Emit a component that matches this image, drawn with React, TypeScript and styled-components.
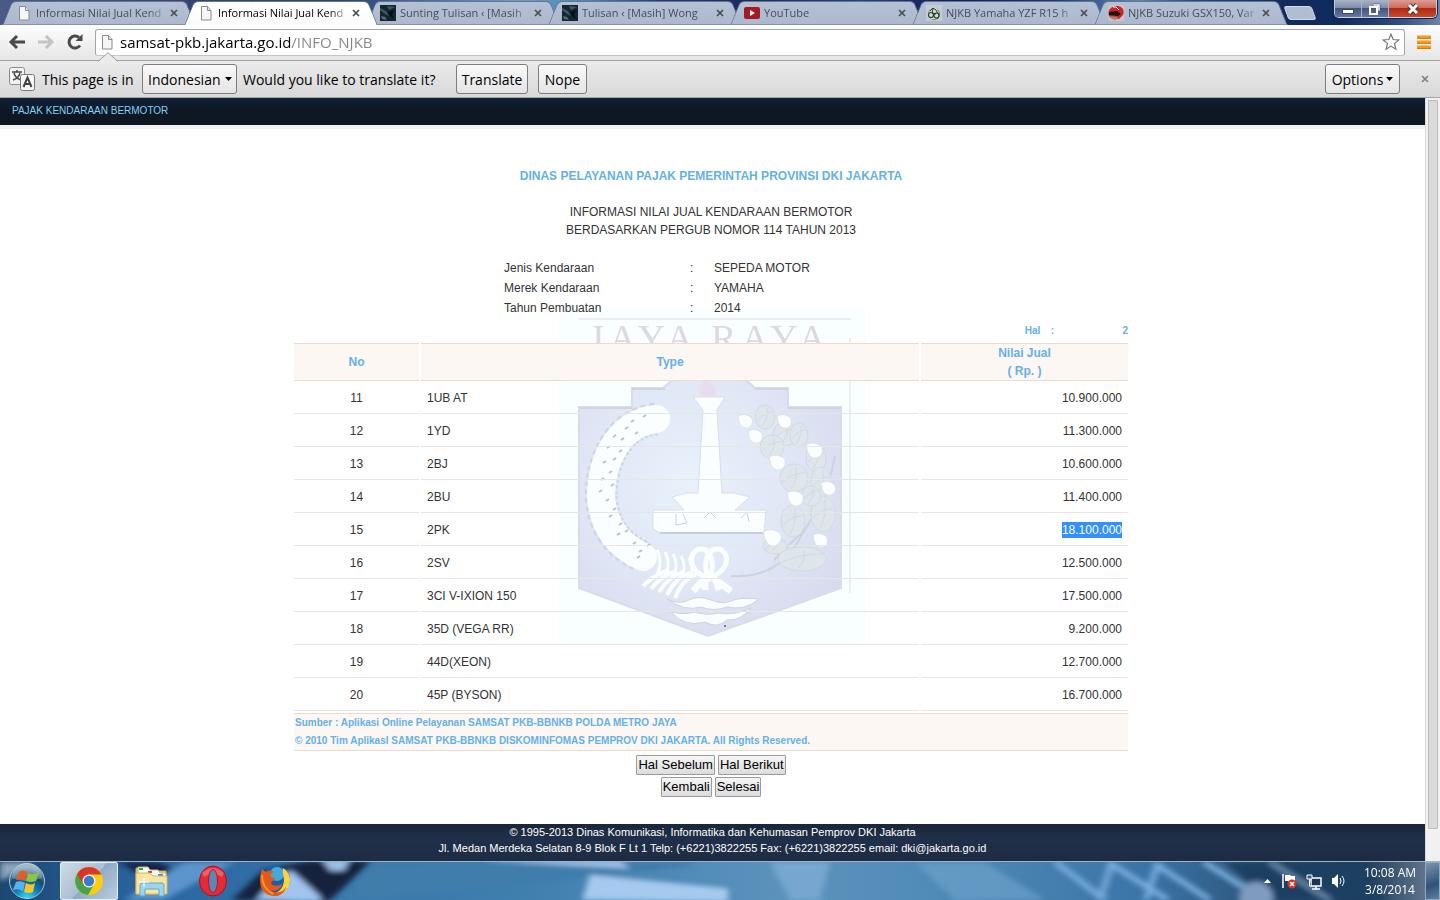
import React from 'react';
import styled, { createGlobalStyle, css } from 'styled-components';

const uiFont = '"Open Sans", "Noto Sans", sans-serif';
const pageFont = '"Liberation Sans", Arial, sans-serif';

const GlobalStyle = createGlobalStyle`
  * { box-sizing: border-box; }
  body { margin: 0; background: #fff; }
  button, input, select { margin: 0; font: inherit; color: inherit; }
`;

/* ---------- browser window ---------- */

const Screen = styled.div`
  display: flex;
  flex-direction: column;
  min-height: 100vh;
  font-family: ${uiFont};
  color: #000;
`;

const TitleBar = styled.header`
  display: flex;
  align-items: flex-start;
  height: 25px;
  padding-left: 2px;
  background: linear-gradient(90deg, #4a5a86 0, #33426f 14%, #2c4478 24%, #6c9dc6 36%, #4f83b3 41%, #1f3a70 46%, #1c2a5e 52%, #27427a 60%, #131c55 66%, #1c356c 73%, #5a8ab6 79%, #1f4a7c 83%, #132a5c 89%, #0f2b5e 93%, #2c4a7c 97%, #7083a6 100%);
`;

const Tabs = styled.div`
  display: flex;
  padding-top: 1px;
`;

const tabHalf = css`
  content: '';
  position: absolute;
  top: 0;
  bottom: 0;
  width: 60%;
  border: 0 solid #66748f;
  border-top-width: 1px;
`;

const TabBox = styled.div<{ $active?: boolean }>`
  position: relative;
  isolation: isolate;
  z-index: ${p => (p.$active ? 2 : 1)};
  display: flex;
  align-items: center;
  flex: none;
  width: 194px;
  height: 24px;
  margin-right: -12px;
  padding: 0 14px;
  font-size: 11px;
  color: ${p => (p.$active ? '#000' : '#474c58')};

  &::before, &::after {
    ${tabHalf}
    z-index: -1;
    background: ${p => (p.$active ? 'linear-gradient(#fff, #fbfbfb)' : 'linear-gradient(#b4c1d5, #abb8cd)')};
    border-bottom: ${p => (p.$active ? '0' : '1px solid #8a93a5')};
  }
  &::before {
    left: 5px;
    border-left-width: 1px;
    border-top-left-radius: 5px;
    transform: skewX(-22deg);
  }
  &::after {
    right: 5px;
    border-right-width: 1px;
    border-top-right-radius: 5px;
    transform: skewX(22deg);
  }
`;

const TabTitle = styled.span`
  flex: 1;
  min-width: 0;
  margin-left: 4px;
  overflow: hidden;
  white-space: nowrap;
  line-height: 18px;
  mask-image: linear-gradient(90deg, #000 112px, transparent 132px);
`;

const PlainButton = styled.button`
  display: flex;
  align-items: center;
  justify-content: center;
  padding: 0;
  border: 0;
  background: none;
`;

const TabClose = styled(PlainButton)`
  width: 16px;
  height: 16px;
`;

const NewTab = styled.button`
  width: 28px;
  height: 14px;
  margin: 6px 0 0 10px;
  padding: 0;
  border: 1px solid #d3dbe8;
  border-radius: 3px;
  background: #b1bdd0;
  transform: skewX(20deg);
  flex: none;
`;

const WindowControls = styled.div`
  display: flex;
  margin: 0 3px 0 auto;
  height: 18px;
  border: 1px solid #c6cfde;
  border-top: 0;
  border-radius: 0 0 5px 5px;
  overflow: hidden;
  box-shadow: 0 0 0 1px #14254d;
`;

const WindowButton = styled(PlainButton)<{ $danger?: boolean }>`
  width: ${p => (p.$danger ? 47 : 27)}px;
  height: 17px;
  border-right: ${p => (p.$danger ? '0' : '1px solid #aab5ca')};
  background: ${p =>
    p.$danger
      ? 'linear-gradient(#dc9c93 0, #cd6c5c 45%, #b02a12 50%, #c74a30 100%)'
      : 'linear-gradient(#a9b4c9 0, #7f8dab 45%, #43547d 50%, #6578a0 100%)'};
`;

const Toolbar = styled.div`
  position: relative;
  display: flex;
  align-items: center;
  height: 36px;
  padding: 0 8px 1px 8px;
  border-bottom: 1px solid #a2a2a2;
  background: linear-gradient(#fdfdfd, #e6e6e6);
`;

const NavButton = styled(PlainButton)`
  width: 18px;
  height: 20px;
  margin-right: 11px;
`;

const AddressBox = styled.div`
  display: flex;
  flex: 1;
  align-items: center;
  height: 27px;
  padding: 0 4px 0 3px;
  border: 1px solid #a6a6a6;
  border-bottom-color: #c4c4c4;
  border-radius: 3px;
  background: #fff;
`;

const AddressInput = styled.input`
  flex: 1;
  height: 24px;
  margin-left: 3px;
  padding: 0 0 0 2px;
  border: 0;
  outline: 0;
  font-size: 15px;
  color: #808080;
  background: linear-gradient(90deg, #000 172px, #858585 172px);
  background-clip: text;
  -webkit-text-fill-color: transparent;
`;

const MenuButton = styled(PlainButton)`
  width: 16px;
  height: 20px;
  margin-left: 11px;
`;

const InfoNotch = styled.svg`
  position: absolute;
  left: 98px;
  bottom: -2px;
`;

const InfoBar = styled.div`
  display: flex;
  align-items: center;
  height: 37px;
  padding: 0 7px 0 8px;
  border-bottom: 1px solid #a5a5a5;
  background: linear-gradient(#ebebeb, #d8d8d8);
  font-size: 14px;
  white-space: nowrap;
`;

const InfoLabel = styled.label<{ $width: number }>`
  width: ${p => p.$width}px;
  margin-left: 6px;
`;

const barControl = css`
  height: 30px;
  border: 1px solid #7d7d7d;
  border-radius: 3px;
  background: linear-gradient(#fafafa, #e4e4e4);
`;

const SelectWrap = styled.div`
  position: relative;
  display: flex;
  align-items: center;
`;

const LanguageSelect = styled.select`
  ${barControl}
  width: 95px;
  padding: 0 0 0 5px;
  appearance: none;
`;

const SelectArrow = styled.svg`
  position: absolute;
  right: 5px;
  pointer-events: none;
`;

const BarButton = styled.button<{ $width: number }>`
  ${barControl}
  display: flex;
  align-items: center;
  justify-content: center;
  gap: 3px;
  width: ${p => p.$width}px;
  margin-right: 10px;
  padding: 0;
`;

const Dismiss = styled(PlainButton)`
  width: 16px;
  height: 16px;
  margin-left: 7px;
`;

const Spacer = styled.div`
  flex: 1;
`;

/* ---------- web page ---------- */

const Viewport = styled.div`
  display: flex;
  flex: 1;
`;

const Page = styled.main`
  display: flex;
  flex: 1;
  flex-direction: column;
  min-width: 0;
  background: #fff;
  font-family: ${pageFont};
  font-size: 12px;
  line-height: 18px;
  color: #333;
`;

const PageTop = styled.div`
  height: 31px;
  padding: 4px 12px;
  border-bottom: 4px solid #eef0f2;
  background: linear-gradient(#12233a, #0e1722 50%);
  font-size: 10px;
  color: #86d0f5;
`;

const Content = styled.div`
  position: relative;
  z-index: 0;
  display: flex;
  flex: 1;
  flex-direction: column;
  align-items: center;
  padding: 38px 3px 27px 0;
`;

const Office = styled.h1`
  margin: 0 0 18px;
  font-size: 12px;
  line-height: 18px;
  color: #63b1ea;
`;

const Subject = styled.p`
  margin: 0 0 19px;
  text-align: center;
`;

const Details = styled.dl`
  display: grid;
  grid-template-columns: 186px 24px 204px;
  margin: 0;
  line-height: 20px;

  dt, dd { margin: 0; }
`;

const Listing = styled.section`
  position: relative;
  width: 834px;
  max-width: 100%;
`;

const PageNumber = styled.div`
  display: flex;
  justify-content: flex-end;
  height: 25px;
  line-height: 26px;
  font-size: 10px;
  font-weight: bold;
  color: #63b1ea;

  span { width: 26px; }
  b { width: 74px; text-align: right; }
`;

const Crest = styled.svg`
  position: absolute;
  z-index: -1;
  left: 265px;
  top: -8px;
`;

const PriceTable = styled.table`
  width: calc(100% + 4px);
  margin: 0 -2px;
  table-layout: fixed;
  border-spacing: 2px 0;
`;

const HeadCell = styled.th<{ $width?: number }>`
  width: ${p => (p.$width ? `${p.$width}px` : 'auto')};
  height: 38px;
  padding: 0;
  border: 1px solid #ecdccd;
  border-width: 1px 0;
  background: #fdf7f3;
  color: #63b1ea;
`;

const Cell = styled.td<{ $align?: string }>`
  height: 33px;
  padding: 2px 6px 0;
  border-bottom: 1px solid #e6e6e6;
  text-align: ${p => p.$align ?? 'left'};
`;

const Selected = styled.mark`
  display: inline-block;
  height: 16px;
  line-height: 16px;
  background: #3390ff;
  color: #fff;
`;

const SourceNote = styled.div`
  margin-top: 2px;
  padding-left: 1px;
  border: 1px solid #ecdccd;
  border-width: 1px 0;
  background: #fdf7f3;
  font-size: 10px;
  font-weight: bold;
  color: #63b1ea;
`;

const Actions = styled.form`
  display: flex;
  flex-direction: column;
  align-items: center;
  gap: 2px;
  padding-top: 4px;
`;

const ActionRow = styled.div`
  display: flex;
  gap: 3px;
`;

const ActionButton = styled.button`
  height: 20px;
  padding: 0 1px;
  border: 1px solid #9a9a9a;
  border-radius: 1px;
  background: linear-gradient(#f6f6f6, #dcdcdc);
  font-size: 13px;
  line-height: 18px;
  color: #000;
`;

const PageFooter = styled.footer`
  height: 37px;
  background: linear-gradient(#1a2638, #20304a 40%, #1d2c43);
  font-size: 11px;
  line-height: 16px;
  text-align: center;
  color: #fff;
`;

const ScrollTrack = styled.div`
  width: 15px;
  padding: 2px 2px 32px 2px;
  border-left: 1px solid #dcdcdc;
  background: #f1f1f1;
`;

const ScrollThumb = styled.div`
  height: 100%;
  border: 1px solid #bcbcbc;
  border-radius: 1px;
  background: #dadada;
`;

/* ---------- desktop task bar ---------- */

const TaskBar = styled.footer`
  position: relative;
  z-index: 0;
  display: flex;
  height: 39px;
  border-top: 1px solid #9fb4c8;
  overflow: hidden;
  background: #3f7cab;
  color: #fff;
`;

const Wallpaper = styled.svg`
  position: absolute;
  z-index: -1;
  left: 0;
  top: 0;
  width: 100%;
  height: 100%;
`;

const StartButton = styled(PlainButton)`
  width: 54px;
  margin-right: 6px;
`;

const TaskButton = styled(PlainButton)<{ $open?: boolean }>`
  width: 58px;
  height: 38px;
  margin-right: 4px;
  border: 1px solid ${p => (p.$open ? '#e6edf4' : 'transparent')};
  border-radius: 2px;
  background: ${p => (p.$open ? 'linear-gradient(135deg, #cfdbe6, #a9bfd3 50%, #8eaac5 50%, #b9cede)' : 'none')};
`;

const Tray = styled.div`
  display: flex;
  align-items: center;
  margin-left: auto;
`;

const TrayIcons = styled.div`
  display: flex;
  align-items: center;
  gap: 8px;
  margin-right: 8px;
`;

const Clock = styled.time`
  width: 70px;
  font-size: 12px;
  line-height: 17px;
  text-align: center;
`;

const ShowDesktop = styled.button`
  align-self: stretch;
  width: 15px;
  padding: 0;
  border: 1px solid #93a9c0;
  background: linear-gradient(160deg, #7c95b0, #2d5278 60%, #5c7fa2);
`;

/* ---------- icons ---------- */

const CrossIcon = ({ color = '#4c4c4c' }: { color?: string }) => (
  <svg width="8" height="8" viewBox="0 0 8 8">
    <path d="M1 1l6 6M7 1L1 7" stroke={color} strokeWidth="1.700" />
  </svg>
);

const PageIcon = () => (
  <svg width="16" height="16" viewBox="0 0 16 16">
    <path d="M3.500 1.500h6l3.500 4v9.500h-9.500z" fill="#f6f6f6" stroke="#8a8a8a" />
    <path d="M9.500 1.500v4h3.500" fill="#ddd" stroke="#8a8a8a" />
  </svg>
);

const BikePhotoIcon = () => (
  <svg width="16" height="16" viewBox="0 0 16 16">
    <rect width="16" height="16" fill="#14262f" />
    <path d="M0 3l6 3 3 5-4-2-5-4zM7 1l8 1-6 3z" fill="#3c5a68" />
    <path d="M8 7l7-2-3 4 2 5-4-3z" fill="#070d12" />
    <path d="M1 11l4 1 2 3-5-1z" fill="#56717c" />
  </svg>
);

const VideoIcon = () => (
  <svg width="16" height="16" viewBox="0 0 16 16">
    <rect y="2" width="16" height="12" rx="2" fill="#a81a22" />
    <path d="M6 5v6l5-3z" fill="#fff" />
  </svg>
);

const GreenBikeIcon = () => (
  <svg width="16" height="16" viewBox="0 0 16 16">
    <rect width="16" height="16" fill="#c6ccd4" />
    <circle cx="8" cy="9" r="6" fill="#4e9a56" />
    <path d="M3 7l2-3 3-2 3 2 2 4-1 4-3 2H5l-3-3z" fill="#d5dcd8" />
    <circle cx="5" cy="10" r="2.500" fill="none" stroke="#2c3a30" strokeWidth="1.200" />
    <circle cx="10.500" cy="10.500" r="2.500" fill="none" stroke="#2c3a30" strokeWidth="1.200" />
    <path d="M4 6l3-3 3 2 2 4M7 4l-1 4 4 1" stroke="#2c3a30" fill="none" />
  </svg>
);

const HelmetIcon = () => (
  <svg width="16" height="16" viewBox="0 0 16 16">
    <rect width="16" height="16" fill="#c9c3c6" />
    <path d="M1 11C-1 4 4 1 9 1c5 0 8 4 6 9l-4 4-8-1z" fill="#c4262b" />
    <path d="M1 7l8-1 4 3-3 2-9-1z" fill="#1c1517" />
    <path d="M2 11l8 1-2 3-4-1z" fill="#b77a62" />
    <path d="M5 2l3 0 3 3" stroke="#fff" fill="none" />
  </svg>
);

const TranslateIcon = () => (
  <svg width="28" height="28" viewBox="0 0 28 28">
    <rect x="1.500" y="2.500" width="15" height="17" rx="2" fill="#f3f3f3" stroke="#8b8b8b" />
    <path d="M4 7h10M9 5v2M6 8c1 4 4 6 7 7M12 8c-1 4-4 6-7 7" stroke="#4a4a4a" strokeWidth="1.500" fill="none" />
    <rect x="12.500" y="9.500" width="14" height="16" rx="2" fill="#f7f7f7" stroke="#777" />
    <path d="M15.500 22l4-9.500 4 9.500M17 19h5" stroke="#444" strokeWidth="2" fill="none" />
  </svg>
);

const Caret = () => (
  <svg width="7" height="4" viewBox="0 0 7 4">
    <path d="M0 0h7L3.500 4z" fill="#000" />
  </svg>
);

const range = (n: number) => Array.from({ length: n }, (_, i) => i);

const wheatDots = [
  [84, 107], [72, 112], [66, 119], [76, 124], [62, 130], [54, 127], [48, 138], [60, 142],
  [54, 150], [44, 153], [50, 163], [42, 170], [52, 176], [40, 182], [47, 191], [54, 200],
  [50, 207], [60, 215], [66, 222], [58, 225], [74, 234], [80, 242], [88, 236], [78, 248],
];

const leaves = [
  [206, 107, 10, 12], [226, 124, 12, 12], [213, 137, 12, 12], [240, 125, 9, 12], [257, 148, 10, 14],
  [235, 168, 14, 14], [262, 172, 10, 15], [234, 211, 12, 16], [264, 204, 12, 18], [216, 236, 12, 8],
  [243, 249, 24, 12], [252, 186, 10, 10],
];

const bolls = [
  [186, 111, 9], [196, 126, 9], [225, 111, 9], [255, 140, 10], [218, 152, 10],
  [269, 178, 9], [236, 188, 10], [213, 227, 11], [261, 230, 9],
];

const wreath = 'M97 109C60 113 42 150 42 187c2 28 16 48 42 60';

const CityCrest = () => (
  <Crest width="307" height="334" viewBox="0 0 307 334" aria-hidden="true">
    <defs>
      <radialGradient id="shield" cx="42%" cy="42%" r="70%">
        <stop offset="0" stopColor="#e9f1fb" />
        <stop offset="0.500" stopColor="#e1e8f6" />
        <stop offset="1" stopColor="#d7daee" />
      </radialGradient>
      <filter id="faded"><feGaussianBlur stdDeviation="0.700" /></filter>
    </defs>
    <rect width="307" height="334" fill="#f9fefe" />
    <g filter="url(#faded)">
      <path d="M20 9h272M291 28v255" stroke="#e9eef0" strokeWidth="2" fill="none" />
      <text x="151" y="41" textAnchor="middle" fontFamily="Liberation Serif, serif" fontSize="38" letterSpacing="5" fill="#dcd8e4">JAYA RAYA</text>
      <path d="M20 97H73V78H104Q125 58 150 58T196 78H229V97H282V278L149 326L20 278Z" fill="url(#shield)" stroke="#d9dcea" strokeWidth="2" />
      <path d="M73 79h33M196 79h33M20 98h53M229 98h53" stroke="#d0d3e1" strokeWidth="2" />
      <path d="M142 86c-6-9 2-15 6-18 0 6 14 8 8 18z" fill="#e9dcee" />
      <g fill="#fafefe" stroke="#d9dee9">
        <path d="M134 87h32l-8 13 5 83h12l16 4-15 13h31l-2 23H101l-7-4v-19h31l-12-13 14-4h12l5-83z" />
        <path d="M117 204v11l11-2-4-9M145 208l6-6 6 6M182 208l6-6 2 10" fill="none" stroke="#c9d1dd" />
      </g>
      <path d="M101 223h103" stroke="#c7cddb" strokeWidth="2" />
      <path d={wreath} fill="none" stroke="#cfd6e4" strokeWidth="33" strokeDasharray="4 3" />
      <path d={wreath} fill="none" stroke="#fafefe" strokeWidth="28" strokeLinecap="round" />
      {wheatDots.map(([x, y]) => (
        <path key={`${x}-${y}`} d={`M${x} ${y}l3-2`} stroke="#b9bfcc" strokeWidth="2" />
      ))}
      <path d="M172 266c32 2 56-12 70-40 14-22 26-40 34-80M215 250l32-32" fill="none" stroke="#cbd3df" strokeWidth="2" />
      {leaves.map(([x, y, rx, ry]) => (
        <g key={`${x}-${y}`} fill="#dee6ec" stroke="#d1d9e2">
          <ellipse cx={x} cy={y} rx={rx} ry={ry} />
          <path d={`M${x - rx + 2} ${y + 4}Q${x} ${y - 6} ${x + rx - 2} ${y - 5}M${x - 3} ${y + ry - 3}Q${x + 4} ${y} ${x + 2} ${y - ry + 3}`} fill="none" />
        </g>
      ))}
      {bolls.map(([x, y, r]) => (
        <path
          key={`${x}-${y}`}
          d={`M${x - r + 2} ${y - 5}Q${x} ${y - r} ${x + r - 2} ${y - 3}Q${x + r} ${y + 5} ${x + 3} ${y + r - 2}Q${x - 6} ${y + r} ${x - r + 2} ${y - 5}z`}
          fill="#fafefe"
          stroke="#dbe1e9"
        />
      ))}
      <g fill="none" stroke="#fafefe" strokeWidth="5">
        {range(5).map(i => (
          <path key={i} d={`M${98 + i * 8} ${240 + i * 2}q7 14 -2 ${28 - i * 2}`} strokeWidth="3" />
        ))}
        {range(5).map(i => (
          <path key={i} d={`M${110 + i * 7} ${260 + i}q-14 4-${26 - i} ${16 + i * 2}`} strokeWidth="4" />
        ))}
        <path d="M150 268C126 262 130 239 142 239s14 20 8 29c-6-9-4-29 8-29s16 20-8 29" />
        <path d="M146 268l-12 13M154 268l18 13M146 270v10M157 270l3 10" strokeWidth="7" />
      </g>
      <path d="M108 289q12 6 22 1t22 0 20 1 28-2q-14 12-32 8-14 5-26 0-16 5-34-8zM112 302q14 3 24 0 12 4 24 1 14 3 32-5-10 13-24 12-10 9-22 2-20 6-34-10z" fill="#fafefe" stroke="#ccd3e2" />
    </g>
    <rect x="165" y="315" width="2" height="2" fill="#77809a" />
  </Crest>
);

const Backdrop = () => (
  <Wallpaper viewBox="0 0 1440 39" preserveAspectRatio="none" aria-hidden="true">
    <defs>
      <linearGradient id="sky">
        <stop offset="0" stopColor="#1c4772" />
        <stop offset="0.100" stopColor="#2a65a0" />
        <stop offset="0.250" stopColor="#3a77ab" />
        <stop offset="0.360" stopColor="#3f7fae" />
        <stop offset="0.550" stopColor="#5c93bd" />
        <stop offset="0.680" stopColor="#4c87b4" />
        <stop offset="0.800" stopColor="#3a73a6" />
        <stop offset="0.880" stopColor="#2c5479" />
        <stop offset="0.950" stopColor="#213f5f" />
        <stop offset="1" stopColor="#6f8095" />
      </linearGradient>
      <filter id="soft" x="-10%" y="-50%" width="120%" height="200%"><feGaussianBlur stdDeviation="3" /></filter>
    </defs>
    <rect width="1440" height="39" fill="url(#sky)" />
    <g filter="url(#soft)">
      <path d="M0 0h34L0 20z" fill="#8fa5ba" />
      <path d="M118 0h40l26 12-30 8z" fill="#122444" />
      <path d="M184 0h50l-70 39h-40z" fill="#5b94cb" />
      <path d="M232 39l30-30 44-10h66l-42 40z" fill="#14233c" />
      <path d="M256 39l22-26 14-4 28 26v6z" fill="#a2c4ee" />
      <path d="M322 -3h28l-6 12h-14z" fill="#9cc0ea" />
      <path d="M372 0h320v4l-320 35h-30z" fill="#3f7dab" />
      <path d="M582 39l8-26 138 14v14z" fill="#a6c9ee" />
      <path d="M480 -2h140l10 9-70-4z" fill="#9cc2e8" />
      <path d="M770 0h60l-10 39h-30z" fill="#77a7d0" />
      <path d="M915 0h70l60 39h-90z" fill="#6ba1cb" opacity="0.700" />
      <path d="M1055 0l50 39M1112 0l-12 39M1108 0l60 39M1158 0l-12 39M1158 4l52 35M1204 0l52 34" stroke="#78addc" strokeWidth="6" fill="none" />
      <path d="M1226 0h130l30 39h-120z" fill="#1d3f62" />
      <circle cx="1256" cy="37" r="17" fill="#7f9cc0" />
      <path d="M1270 0l60 39" stroke="#688aad" strokeWidth="5" />
    </g>
  </Wallpaper>
);

const StartIcon = () => (
  <svg width="38" height="38" viewBox="0 0 38 38">
    <defs>
      <radialGradient id="orb" cx="50%" cy="100%" r="90%">
        <stop offset="0" stopColor="#35e1ff" />
        <stop offset="0.400" stopColor="#0f7cb5" />
        <stop offset="0.700" stopColor="#174a70" />
        <stop offset="1" stopColor="#7da3bd" />
      </radialGradient>
    </defs>
    <circle cx="19" cy="19" r="17.500" fill="url(#orb)" stroke="#a8c2d2" />
    <path d="M4 16a15 15 0 0 1 30 0q-15 6-30 0z" fill="#fff" opacity="0.250" />
    <path d="M11 10q4-3 8 0l-2 9q-4-3-9-1z" fill="#ec5a24" />
    <path d="M20 11q4 3 11-1l-3 9q-5 2-10 0z" fill="#8cc63e" />
    <path d="M8 20q5-2 9 1l-2 8q-4-3-10-1z" fill="#5cb0ec" />
    <path d="M18 21q5 3 9 0l-2 9q-4 2-9 0z" fill="#fdc52a" />
  </svg>
);

const ChromeIcon = () => (
  <svg width="30" height="30" viewBox="0 0 30 30">
    <circle cx="15" cy="15" r="14" fill="#f9cd0e" />
    <path d="M3 8A14 14 0 0 0 14 29l6-10.500-5-3.500z" fill="#4aa247" />
    <path d="M15 8.500h12.500A14 14 0 0 0 3 8l6 10z" fill="#da3529" />
    <circle cx="15" cy="15" r="6.500" fill="#f4f4f4" />
    <circle cx="15" cy="15" r="5.200" fill="#3c79c8" />
  </svg>
);

const FolderIcon = () => (
  <svg width="34" height="32" viewBox="0 0 34 32">
    <path d="M2 3h10v3h20v23H2z" fill="#eed27a" stroke="#c7a344" />
    <path d="M4 2h10l2 3h8l2 3h6v5H4z" fill="#fff" stroke="#c9b36a" />
    <path d="M5 3h4v2H5z" fill="#2ab03c" /><path d="M14 6h4v2h-4z" fill="#d3473a" /><path d="M24 9h5v2h-5z" fill="#3394dc" />
    <path d="M2 8h14l3 3h14v18H2z" fill="#f6e6a2" stroke="#d4b65a" />
    <path d="M6 31V20q0-2 2-2h20q2 0 2 2v11h-5v-7H11v7z" fill="#9fd4ec" stroke="#62a8cb" />
    <path d="M10 13v9M5 17h10" stroke="#fff" />
  </svg>
);

const OperaIcon = () => (
  <svg width="30" height="32" viewBox="0 0 30 32">
    <ellipse cx="15" cy="16" rx="13.500" ry="15" fill="#e42a36" stroke="#a8101c" />
    <path d="M4 8q11-10 22 0l-2 4q-9-6-18 0z" fill="#f4737c" opacity="0.700" />
    <ellipse cx="15" cy="16" rx="4.500" ry="11.500" fill="#5d88b4" stroke="#b51722" />
  </svg>
);

const FirefoxIcon = () => (
  <svg width="32" height="32" viewBox="0 0 32 32">
    <circle cx="17" cy="15" r="14" fill="#1c5fa6" />
    <circle cx="18" cy="9" r="7" fill="#45a9dc" />
    <path d="M24 3c8 5 9 15 4 21-4 6-12 8-18 5 9 0 14-5 15-13 0-5-2-9-1-13z" fill="#fbd43a" />
    <path d="M3 4l4 3c3-2 6-1 8 0-3 1-4 3-3 5l4 1c0 3-4 3-4 5 2 4 8 3 11 1-1 6-7 8-12 6 5 4 13 3 16-3-1 6-7 10-13 9C3 30-2 20 3 4z" fill="#e2591c" />
    <path d="M3 10c0 8 3 15 11 19" stroke="#f7932a" strokeWidth="2" fill="none" />
  </svg>
);

/* ---------- data ---------- */

const tabs = [
  { title: 'Informasi Nilai Jual Kend', icon: <PageIcon /> },
  { title: 'Informasi Nilai Jual Kend', icon: <PageIcon />, active: true },
  { title: 'Sunting Tulisan ‹ [Masih', icon: <BikePhotoIcon /> },
  { title: 'Tulisan ‹ [Masih] Wong', icon: <BikePhotoIcon /> },
  { title: 'YouTube', icon: <VideoIcon /> },
  { title: 'NJKB Yamaha YZF R15 h', icon: <GreenBikeIcon /> },
  { title: 'NJKB Suzuki GSX150, Var', icon: <HelmetIcon /> },
];

const details = [
  ['Jenis Kendaraan', 'SEPEDA MOTOR'],
  ['Merek Kendaraan', 'YAMAHA'],
  ['Tahun Pembuatan', '2014'],
];

const vehicles = [
  { no: 11, type: '1UB AT', price: '10.900.000' },
  { no: 12, type: '1YD', price: '11.300.000' },
  { no: 13, type: '2BJ', price: '10.600.000' },
  { no: 14, type: '2BU', price: '11.400.000' },
  { no: 15, type: '2PK', price: '18.100.000', selected: true },
  { no: 16, type: '2SV', price: '12.500.000' },
  { no: 17, type: '3CI V-IXION 150', price: '17.500.000' },
  { no: 18, type: '35D (VEGA RR)', price: '9.200.000' },
  { no: 19, type: '44D(XEON)', price: '12.700.000' },
  { no: 20, type: '45P (BYSON)', price: '16.700.000' },
];

export default function App() {
  return (
    <Screen>
      <GlobalStyle />
      <TitleBar>
        <Tabs>
          {tabs.map((tab, i) => (
            <TabBox key={i} $active={tab.active}>
              {tab.icon}
              <TabTitle>{tab.title}</TabTitle>
              <TabClose type="button" aria-label="Close tab"><CrossIcon /></TabClose>
            </TabBox>
          ))}
        </Tabs>
        <NewTab type="button" aria-label="New tab" />
        <WindowControls>
          <WindowButton type="button" aria-label="Minimize">
            <svg width="12" height="10" viewBox="0 0 12 10"><rect x="0.500" y="5.500" width="11" height="4" fill="#fff" stroke="#3b4666" /></svg>
          </WindowButton>
          <WindowButton type="button" aria-label="Restore">
            <svg width="12" height="12" viewBox="0 0 12 12">
              <path d="M4 1h7v7H9V3H4z" fill="#fff" stroke="#3b4666" strokeWidth="0.500" />
              <path d="M1 4h7v7H1z" fill="none" stroke="#fff" strokeWidth="2" />
            </svg>
          </WindowButton>
          <WindowButton type="button" aria-label="Close" $danger>
            <svg width="14" height="12" viewBox="0 0 14 12">
              <path d="M3 2l8 8M11 2l-8 8" stroke="#543236" strokeWidth="5" />
              <path d="M3 2l8 8M11 2l-8 8" stroke="#fff" strokeWidth="3" />
            </svg>
          </WindowButton>
        </WindowControls>
      </TitleBar>

      <Toolbar>
        <NavButton type="button" aria-label="Back">
          <svg width="18" height="16" viewBox="0 0 18 16"><path d="M17 8H3M9 2L3 8l6 6" fill="none" stroke="#4a4a4a" strokeWidth="3" /></svg>
        </NavButton>
        <NavButton type="button" aria-label="Forward">
          <svg width="18" height="16" viewBox="0 0 18 16"><path d="M1 8h14M9 2l6 6-6 6" fill="none" stroke="#c4c4c4" strokeWidth="3" /></svg>
        </NavButton>
        <NavButton type="button" aria-label="Reload">
          <svg width="18" height="18" viewBox="0 0 18 18">
            <path d="M14 12.500A6 6 0 1 1 13 4.500" fill="none" stroke="#4a4a4a" strokeWidth="3" />
            <path d="M16.500 1v7h-7z" fill="#4a4a4a" />
          </svg>
        </NavButton>
        <AddressBox>
          <PageIcon />
          <AddressInput aria-label="Address" defaultValue="samsat-pkb.jakarta.go.id/INFO_NJKB" />
          <PlainButton type="button" aria-label="Bookmark this page">
            <svg width="18" height="18" viewBox="0 0 18 18">
              <path d="M9 1.200l2.200 5.300 5.600.4-4.300 3.700 1.400 5.600L9 13.100l-4.900 3.100 1.400-5.600L1.200 6.900l5.600-.4z" fill="#fff" stroke="#777" strokeWidth="1.200" />
            </svg>
          </PlainButton>
        </AddressBox>
        <MenuButton type="button" aria-label="Menu">
          <svg width="14" height="14" viewBox="0 0 14 14">
            <path d="M0 2h14M0 7h14M0 12h14" stroke="#f59a14" strokeWidth="3" />
            <path d="M0 3.500h14M0 8.500h14M0 13.500h14" stroke="#dd7a10" />
          </svg>
        </MenuButton>
        <InfoNotch width="20" height="10" viewBox="0 0 20 10">
          <path d="M0 10L10 1l10 9z" fill="#ebebeb" />
          <path d="M0 9.500L10 .7l10 8.800" fill="none" stroke="#a2a2a2" />
        </InfoNotch>
      </Toolbar>

      <InfoBar>
        <TranslateIcon />
        <InfoLabel $width={100} htmlFor="language">This page is in</InfoLabel>
        <SelectWrap>
          <LanguageSelect id="language" defaultValue="Indonesian">
            <option>Indonesian</option>
          </LanguageSelect>
          <SelectArrow width="7" height="4" viewBox="0 0 7 4"><path d="M0 0h7L3.500 4z" /></SelectArrow>
        </SelectWrap>
        <InfoLabel as="span" $width={213}>Would you like to translate it?</InfoLabel>
        <BarButton type="button" $width={72}>Translate</BarButton>
        <BarButton type="button" $width={49}>Nope</BarButton>
        <Spacer />
        <BarButton type="button" $width={75}>Options <Caret /></BarButton>
        <Dismiss type="button" aria-label="Dismiss"><CrossIcon color="#808080" /></Dismiss>
      </InfoBar>

      <Viewport>
        <Page>
          <PageTop>PAJAK KENDARAAN BERMOTOR</PageTop>
          <Content>
            <Office>DINAS PELAYANAN PAJAK PEMERINTAH PROVINSI DKI JAKARTA</Office>
            <Subject>
              INFORMASI NILAI JUAL KENDARAAN BERMOTOR
              <br />
              BERDASARKAN PERGUB NOMOR 114 TAHUN 2013
            </Subject>
            <Details>
              {details.map(([label, value]) => (
                <React.Fragment key={label}>
                  <dt>{label}</dt>
                  <dd>:</dd>
                  <dd>{value}</dd>
                </React.Fragment>
              ))}
            </Details>
            <Listing>
              <CityCrest />
              <PageNumber><span>Hal</span>:<b>2</b></PageNumber>
              <PriceTable>
                <thead>
                  <tr>
                    <HeadCell $width={125}>No</HeadCell>
                    <HeadCell>Type</HeadCell>
                    <HeadCell $width={207}>Nilai Jual<br />( Rp. )</HeadCell>
                  </tr>
                </thead>
                <tbody>
                  {vehicles.map(v => (
                    <tr key={v.no}>
                      <Cell $align="center">{v.no}</Cell>
                      <Cell>{v.type}</Cell>
                      <Cell $align="right">{v.selected ? <Selected>{v.price}</Selected> : v.price}</Cell>
                    </tr>
                  ))}
                </tbody>
              </PriceTable>
              <SourceNote>
                Sumber : Aplikasi Online Pelayanan SAMSAT PKB-BBNKB POLDA METRO JAYA
                <br />
                © 2010 Tim Aplikasl SAMSAT PKB-BBNKB DISKOMINFOMAS PEMPROV DKI JAKARTA. All Rights Reserved.
              </SourceNote>
            </Listing>
            <Actions>
              <ActionRow>
                <ActionButton type="button">Hal Sebelum</ActionButton>
                <ActionButton type="button">Hal Berikut</ActionButton>
              </ActionRow>
              <ActionRow>
                <ActionButton type="button">Kembali</ActionButton>
                <ActionButton type="button">Selesai</ActionButton>
              </ActionRow>
            </Actions>
          </Content>
          <PageFooter>
            © 1995-2013 Dinas Komunikasi, Informatika dan Kehumasan Pemprov DKI Jakarta
            <br />
            Jl. Medan Merdeka Selatan 8-9 Blok F Lt 1 Telp: (+6221)3822255 Fax: (+6221)3822255 email: dki@jakarta.go.id
          </PageFooter>
        </Page>
        <ScrollTrack><ScrollThumb /></ScrollTrack>
      </Viewport>

      <TaskBar>
        <Backdrop />
        <StartButton type="button" aria-label="Start"><StartIcon /></StartButton>
        <TaskButton type="button" aria-label="Chrome" $open><ChromeIcon /></TaskButton>
        <TaskButton type="button" aria-label="Explorer"><FolderIcon /></TaskButton>
        <TaskButton type="button" aria-label="Opera"><OperaIcon /></TaskButton>
        <TaskButton type="button" aria-label="Firefox"><FirefoxIcon /></TaskButton>
        <Tray>
          <TrayIcons>
            <svg width="9" height="6" viewBox="0 0 9 6"><path d="M1 5h7L4.500 1z" fill="#fff" /></svg>
            <svg width="18" height="18" viewBox="0 0 18 18">
              <path d="M3 2v14" stroke="#fff" strokeWidth="1.500" />
              <path d="M5 3h5l1 1h4v6H9L8 9H5z" fill="#fff" />
              <circle cx="12" cy="12" r="4.500" fill="#d6301f" />
              <path d="M10 10l4 4M14 10l-4 4" stroke="#fff" strokeWidth="1.500" />
            </svg>
            <svg width="17" height="17" viewBox="0 0 17 17">
              <path d="M5 5h10v8H5zM6 16h8M10 13v3" fill="#1b3554" stroke="#fff" strokeWidth="1.500" />
              <path d="M1 2h5v4H1zM3.500 6v7H5" fill="#3a587c" stroke="#fff" />
            </svg>
            <svg width="16" height="16" viewBox="0 0 16 16">
              <path d="M1 5h2l4-4v14l-4-4H1z" fill="#fff" />
              <path d="M9 5q2 3 0 6M11 3q4 5 0 10" stroke="#fff" fill="none" />
            </svg>
          </TrayIcons>
          <Clock>10:08 AM<br />3/8/2014</Clock>
          <ShowDesktop type="button" aria-label="Show desktop" />
        </Tray>
      </TaskBar>
    </Screen>
  );
}
